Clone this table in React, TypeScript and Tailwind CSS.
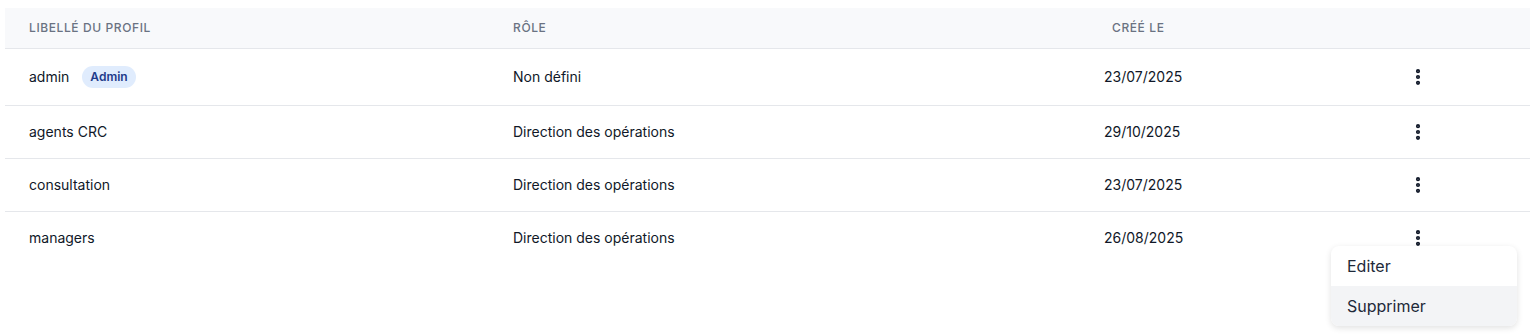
import { EllipsisVertical } from "lucide-react";

interface Profile {
  label: string;
  role: string;
  created: string;
  admin?: boolean;
}

const profiles: Profile[] = [
  { label: "admin", role: "Non défini", created: "23/07/2025", admin: true },
  { label: "agents CRC", role: "Direction des opérations", created: "29/10/2025" },
  { label: "consultation", role: "Direction des opérations", created: "23/07/2025" },
  { label: "managers", role: "Direction des opérations", created: "26/08/2025" },
];

export default function App() {
  return (
    <div className="min-h-[335px] bg-white pl-[5px] pr-px pt-2 font-['Inter','Liberation_Sans',sans-serif] text-gray-900">
      <table className="w-full table-fixed border-collapse text-left">
        <thead>
          <tr className="h-10 border-b border-gray-200 bg-[#f8f9fb]">
            <th className="w-[484px] px-6 text-xs font-medium uppercase tracking-wider text-gray-500">
              Libellé du profil
            </th>
            <th className="w-[591px] px-6 text-xs font-medium uppercase tracking-wider text-gray-500">
              Rôle
            </th>
            <th className="w-[300px] pl-8 text-xs font-medium uppercase tracking-wider text-gray-500">
              Créé le
            </th>
            <th className="px-6"></th>
          </tr>
        </thead>
        <tbody>
          {profiles.map((p, i) => (
            <tr
              key={p.label}
              className={
                i === profiles.length - 1
                  ? "h-[53px]"
                  : p.admin
                  ? "h-[57px] border-b border-gray-200"
                  : "h-[53px] border-b border-gray-200"
              }
            >
              <td className="px-6 text-sm">
                <div className="flex items-center gap-[13px]">
                  <span>{p.label}</span>
                  {p.admin && (
                    <span className="rounded-full bg-[#e0ecfd] px-2 py-[3px] text-xs font-semibold text-[#1e3a8a]">
                      Admin
                    </span>
                  )}
                </div>
              </td>
              <td className="px-6 text-sm">{p.role}</td>
              <td className="px-6 text-sm">{p.created}</td>
              <td className="pl-[26px]">
                <div className="relative w-6">
                  <button className="flex h-6 w-6 items-center justify-center text-gray-900" aria-label="Actions">
                    <EllipsisVertical size={20} strokeWidth={3} />
                  </button>
                  {i === profiles.length - 1 && (
                    <div className="absolute left-[-75px] top-[20px] z-10 w-[186px] overflow-hidden rounded-lg bg-white shadow-[0_2px_6px_rgba(0,0,0,0.12)]">
                      <div className="flex h-10 items-center px-4 text-base text-gray-800">Editer</div>
                      <div className="flex h-10 items-center bg-gray-100 px-4 text-base text-gray-800">Supprimer</div>
                    </div>
                  )}
                </div>
              </td>
            </tr>
          ))}
        </tbody>
      </table>
    </div>
  );
}
